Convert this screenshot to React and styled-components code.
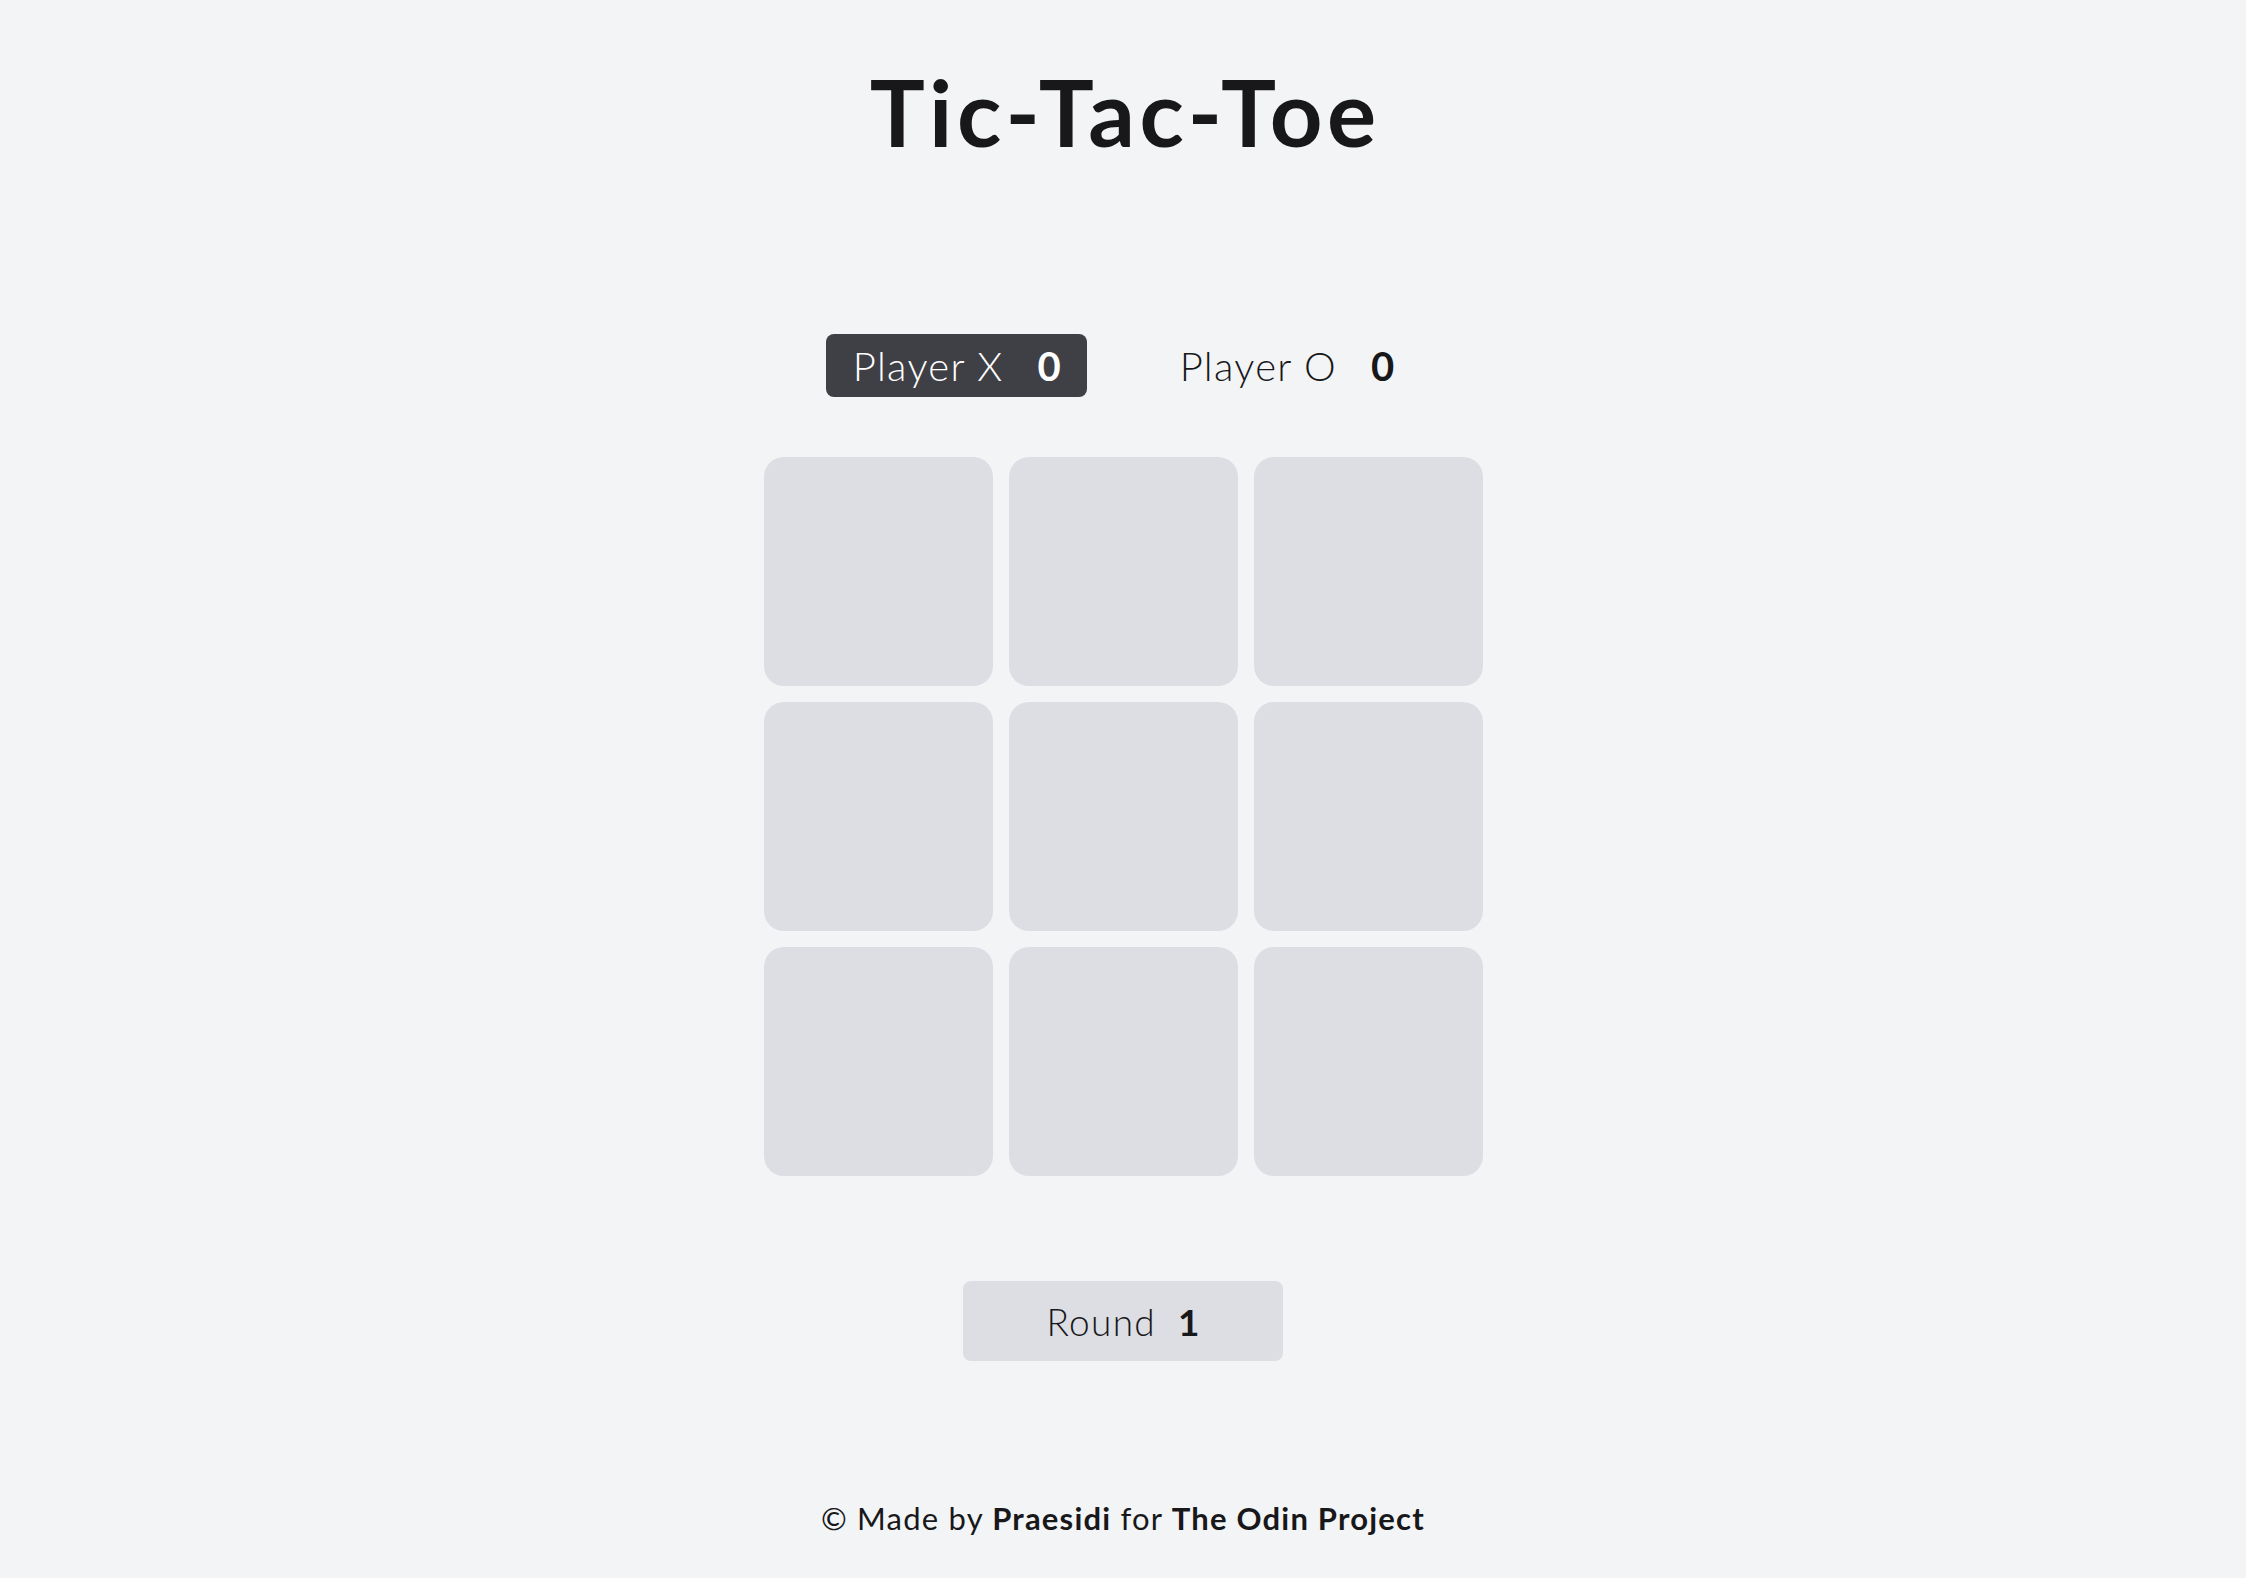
import React, { useState } from 'react';
import styled, { createGlobalStyle } from 'styled-components';

const GlobalStyle = createGlobalStyle`
  html, body {
    margin: 0;
    padding: 0;
    background: #f3f4f6;
    color: #18181b;
    font-family: "Lato", "Open Sans", sans-serif;
  }
`;

const Page = styled.div`
  display: flex;
  flex-direction: column;
  align-items: center;
  min-height: 100vh;
  box-sizing: border-box;
  padding-top: 66px;
`;

const Title = styled.h1`
  margin: 0;
  font-size: 92px;
  line-height: 1;
  font-weight: 700;
  letter-spacing: 4.5px;
  text-indent: 4.5px;
`;

const Scoreboard = styled.div`
  display: flex;
  gap: 66px;
  margin-top: 176px;
`;

const Badge = styled.div`
  display: flex;
  align-items: center;
  gap: 34px;
  height: 63px;
  padding: 0 26px 0 27px;
  border-radius: 8px;
  box-sizing: border-box;
  font-size: 40px;
  line-height: 1;
  background: ${(p) => (p.$active ? '#3f3f46' : 'transparent')};
  color: ${(p) => (p.$active ? '#ffffff' : '#18181b')};
`;

const Label = styled.span`
  font-weight: 300;
  letter-spacing: 1.3px;
`;

const Score = styled.span`
  font-weight: 700;
`;

const Board = styled.div`
  display: grid;
  grid-template-columns: repeat(3, 229px);
  grid-auto-rows: 229px;
  gap: 16px;
  margin-top: 60px;
`;

const Cell = styled.button`
  border: none;
  border-radius: 20px;
  background: #dcdee3;
  padding: 0;
  cursor: pointer;
`;

const RoundBox = styled.div`
  display: flex;
  align-items: center;
  justify-content: center;
  gap: 22px;
  width: 320px;
  height: 80px;
  margin-top: 105px;
  border-radius: 8px;
  background: #dcdee3;
  font-size: 37px;
  line-height: 1;
`;

const Footer = styled.footer`
  margin-top: 142px;
  font-size: 31px;
  line-height: 1;
  font-weight: 400;
  letter-spacing: 1.2px;

  b {
    font-weight: 700;
  }
`;

const App = () => {
  const [cells, setCells] = useState(Array(9).fill(''));
  const [turn, setTurn] = useState('X');

  const play = (i) => {
    if (cells[i]) return;
    const next = [...cells];
    next[i] = turn;
    setCells(next);
    setTurn(turn === 'X' ? 'O' : 'X');
  };

  return (
    <>
      <GlobalStyle />
      <Page>
        <Title>Tic-Tac-Toe</Title>
        <Scoreboard>
          <Badge $active={turn === 'X'}>
            <Label>Player X</Label>
            <Score>0</Score>
          </Badge>
          <Badge $active={turn === 'O'}>
            <Label>Player O</Label>
            <Score>0</Score>
          </Badge>
        </Scoreboard>
        <Board>
          {cells.map((c, i) => (
            <Cell key={i} onClick={() => play(i)} aria-label={`cell ${i + 1}`} />
          ))}
        </Board>
        <RoundBox>
          <Label>Round</Label>
          <Score>1</Score>
        </RoundBox>
        <Footer>
          © Made by <b>Praesidi</b> for <b>The Odin Project</b>
        </Footer>
      </Page>
    </>
  );
};

export default App;
